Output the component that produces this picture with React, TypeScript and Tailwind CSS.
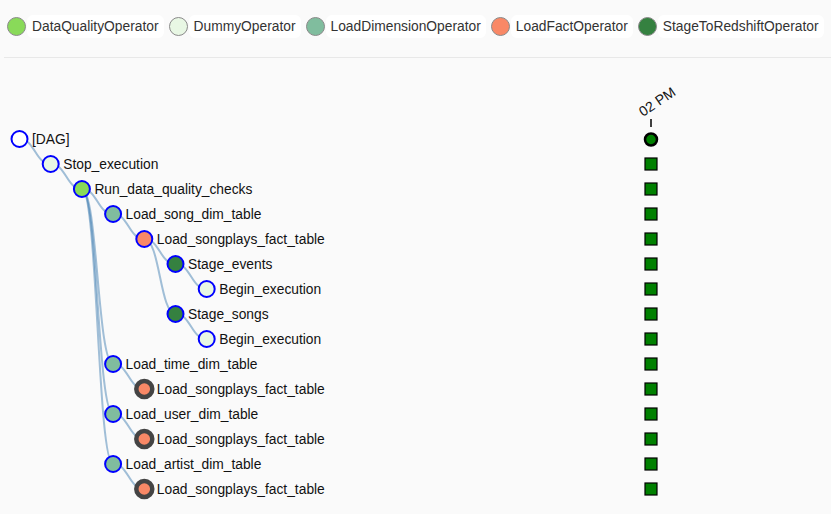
import { FC } from 'react';

interface LegendItem {
  name: string;
  color: string;
}

interface TreeNode {
  label: string;
  depth: number;
  color: string;
  parent: number | null;
  collapsed?: boolean;
}

const legend: LegendItem[] = [
  { name: 'DataQualityOperator', color: '#89DA59' },
  { name: 'DummyOperator', color: '#e8f7e4' },
  { name: 'LoadDimensionOperator', color: '#80BD9E' },
  { name: 'LoadFactOperator', color: '#F98866' },
  { name: 'StageToRedshiftOperator', color: '#358140' },
];

const nodes: TreeNode[] = [
  { label: '[DAG]', depth: 0, color: '#ffffff', parent: null },
  { label: 'Stop_execution', depth: 1, color: '#e8f7e4', parent: 0 },
  { label: 'Run_data_quality_checks', depth: 2, color: '#89DA59', parent: 1 },
  { label: 'Load_song_dim_table', depth: 3, color: '#80BD9E', parent: 2 },
  { label: 'Load_songplays_fact_table', depth: 4, color: '#F98866', parent: 3 },
  { label: 'Stage_events', depth: 5, color: '#358140', parent: 4 },
  { label: 'Begin_execution', depth: 6, color: '#e8f7e4', parent: 5 },
  { label: 'Stage_songs', depth: 5, color: '#358140', parent: 4 },
  { label: 'Begin_execution', depth: 6, color: '#e8f7e4', parent: 7 },
  { label: 'Load_time_dim_table', depth: 3, color: '#80BD9E', parent: 2 },
  { label: 'Load_songplays_fact_table', depth: 4, color: '#F98866', parent: 9, collapsed: true },
  { label: 'Load_user_dim_table', depth: 3, color: '#80BD9E', parent: 2 },
  { label: 'Load_songplays_fact_table', depth: 4, color: '#F98866', parent: 11, collapsed: true },
  { label: 'Load_artist_dim_table', depth: 3, color: '#80BD9E', parent: 2 },
  { label: 'Load_songplays_fact_table', depth: 4, color: '#F98866', parent: 13, collapsed: true },
];

const nx = (depth: number) => 19.5 + depth * 31.2;
const ny = (row: number) => 139 + row * 25;

const diagonal = (s: number, t: number) => {
  const sx = nx(nodes[s].depth);
  const sy = ny(s);
  const tx = nx(nodes[t].depth);
  const ty = ny(t);
  const m = (sx + tx) / 2;
  return `M${sx},${sy}C${m},${sy} ${m},${ty} ${tx},${ty}`;
};

const App: FC = () => {
  return (
    <div
      className="w-[831px] h-[514px] bg-[#fafafa] overflow-hidden text-[#222]"
      style={{ fontFamily: '"Liberation Sans", Arial, sans-serif' }}
    >
      <div className="flex items-center gap-[5px] pl-[7px] pt-[15px]">
        {legend.map((l) => (
          <div key={l.name} className="flex items-center">
            <span
              className="w-[19px] h-[19px] rounded-full border border-[#8a8a8a]"
              style={{ backgroundColor: l.color }}
            />
            <span className="ml-px bg-white rounded-md px-[5px] h-[23px] leading-[23px] text-[13.8px] text-[#333]">
              {l.name}
            </span>
          </div>
        ))}
      </div>
      <div className="ml-[4px] mt-[19px] border-t border-[#e8e8e8]" />

      <svg width={831} height={456} viewBox="0 58 831 456" className="block">
        <g fill="none" stroke="#4682b4" strokeOpacity={0.5} strokeWidth={2}>
          {nodes.map((n, i) =>
            n.parent === null ? null : <path key={i} d={diagonal(n.parent, i)} />
          )}
        </g>
        {nodes.map((n, i) => (
          <g key={i}>
            <circle
              cx={nx(n.depth)}
              cy={ny(i)}
              r={8}
              fill={n.color}
              stroke={n.collapsed ? '#444' : '#0000ff'}
              strokeWidth={n.collapsed ? 4.5 : 2}
            />
            <text
              x={nx(n.depth) + 12.5}
              y={ny(i) + 5}
              fontSize={13.8}
              fill="#111"
            >
              {n.label}
            </text>
          </g>
        ))}

        <text
          transform="translate(643,117) rotate(-34)"
          fontSize={14}
          fill="#111"
        >
          02 PM
        </text>
        <line x1={651} y1={119} x2={651} y2={127} stroke="#000" strokeWidth={1.5} />
        <circle cx={651} cy={139.5} r={6} fill="#008000" stroke="#000" strokeWidth={2.5} />
        {nodes.slice(1).map((_, i) => (
          <rect
            key={i}
            x={645}
            y={ny(i + 1) - 6}
            width={12}
            height={12}
            fill="#008000"
            stroke="#000"
            strokeWidth={1.2}
          />
        ))}
      </svg>
    </div>
  );
};

export default App;
